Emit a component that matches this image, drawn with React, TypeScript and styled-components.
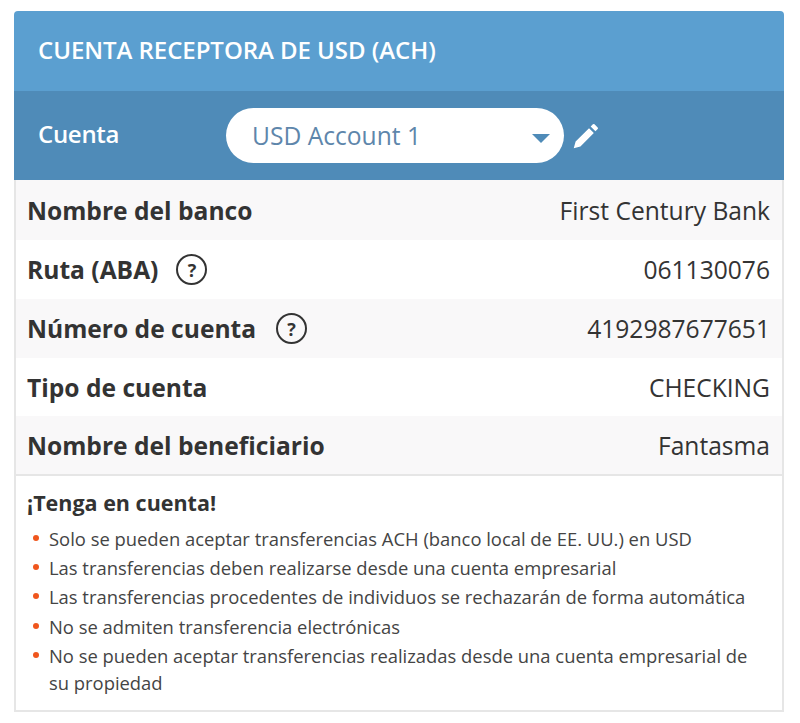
import React from "react";
import styled, { createGlobalStyle } from "styled-components";

const GlobalStyle = createGlobalStyle`
  html, body {
    margin: 0;
    background: #fff;
    font-family: "Open Sans", "Liberation Sans", sans-serif;
  }
`;

const Page = styled.div`
  padding: 11px 16px 10px 14px;
`;

const Card = styled.section`
  width: 770px;
  box-sizing: border-box;
  border-radius: 4px 4px 0 0;
  overflow: hidden;
`;

const Title = styled.h2`
  margin: 0;
  height: 80px;
  box-sizing: border-box;
  padding: 0 0 3px 24px;
  display: flex;
  align-items: center;
  background: #5b9fd0;
  color: #fff;
  font-size: 24px;
  font-weight: 600;
  letter-spacing: -0.05px;
`;

const AccountBar = styled.div`
  height: 89px;
  padding: 0 0 0 24px;
  display: flex;
  align-items: center;
  background: #4f8bb8;
  color: #fff;
  font-size: 24px;
  font-weight: 600;
`;

const AccountLabel = styled.span`
  width: 188px;
  padding-bottom: 4px;
  letter-spacing: -0.3px;
`;

const Select = styled.div`
  width: 338px;
  height: 55px;
  box-sizing: border-box;
  padding: 0 14px 0 26px;
  display: flex;
  align-items: center;
  justify-content: space-between;
  border-radius: 28px;
  background: #fff;
  color: #5e86ab;
  font-size: 24.6px;
  font-weight: 400;
`;

const Caret = styled.span`
  width: 0;
  height: 0;
  margin-top: 5px;
  border-left: 9px solid transparent;
  border-right: 9px solid transparent;
  border-top: 9px solid #4f8bb8;
`;

const EditIcon = styled.svg`
  width: 28px;
  height: 28px;
  margin-left: 8px;
  fill: #fff;
`;

const Rows = styled.div`
  border-left: 2px solid #e6e6e6;
  border-right: 2px solid #e6e6e6;
  border-bottom: 2px solid #e6e6e6;
`;

const Row = styled.div<{ $shaded: boolean; $height: number }>`
  height: ${(p) => p.$height}px;
  padding: 0 12px 0 11px;
  display: flex;
  align-items: center;
  justify-content: space-between;
  background: ${(p) => (p.$shaded ? "#f9f8f9" : "#fff")};
  color: #333;
  font-size: 24.6px;
`;

const RowLabel = styled.span`
  display: flex;
  align-items: center;
  font-weight: 700;
`;

const Help = styled.span<{ $gap: number }>`
  width: 27px;
  height: 27px;
  margin-left: ${(p) => p.$gap}px;
  display: flex;
  align-items: center;
  justify-content: center;
  border: 2px solid #333;
  border-radius: 50%;
  font-size: 18px;
  font-weight: 700;
`;

const RowValue = styled.span`
  font-weight: 400;
`;

const Notes = styled.div`
  height: 236px;
  box-sizing: border-box;
  padding: 13px 20px 0 11px;
  border: 2px solid #e6e6e6;
  border-top: 0;
  color: #444;
`;

const NotesTitle = styled.h3`
  margin: 0 0 7.5px;
  color: #333;
  font-size: 21.5px;
  line-height: 28px;
  font-weight: 700;
`;

const NotesList = styled.ul`
  margin: 0;
  padding: 0;
  list-style: none;
`;

const Note = styled.li`
  position: relative;
  margin-bottom: 2.4px;
  padding-left: 22px;
  font-size: 18.4px;
  line-height: 27px;

  &::before {
    content: "";
    position: absolute;
    left: 6px;
    top: 10px;
    width: 6px;
    height: 6px;
    border-radius: 50%;
    background: #f0561d;
  }
`;

const rows = [
  { label: "Nombre del banco", value: "First Century Bank", height: 60 },
  { label: "Ruta (ABA)", value: "061130076", help: 18, height: 59 },
  { label: "Número de cuenta", value: "4192987677651", help: 20, height: 59 },
  { label: "Tipo de cuenta", value: "CHECKING", height: 58 },
  { label: "Nombre del beneficiario", value: "Fantasma", height: 58 },
];

const notes = [
  "Solo se pueden aceptar transferencias ACH (banco local de EE. UU.) en USD",
  "Las transferencias deben realizarse desde una cuenta empresarial",
  "Las transferencias procedentes de individuos se rechazarán de forma automática",
  "No se admiten transferencia electrónicas",
  "No se pueden aceptar transferencias realizadas desde una cuenta empresarial de su propiedad",
];

export default function App() {
  return (
    <Page>
      <GlobalStyle />
      <Card>
        <Title>CUENTA RECEPTORA DE USD (ACH)</Title>
        <AccountBar>
          <AccountLabel>Cuenta</AccountLabel>
          <Select>
            USD Account 1
            <Caret />
          </Select>
          <EditIcon viewBox="0 0 24 24">
            <path d="M1.5 22.5l1.6-5.7L14.6 5.3l4.1 4.1L7.2 20.9l-5.7 1.6zM16 3.9l1.9-1.9a1 1 0 0 1 1.4 0l2.7 2.7a1 1 0 0 1 0 1.4L20.1 8 16 3.9z" />
          </EditIcon>
        </AccountBar>
        <Rows>
          {rows.map((row, i) => (
            <Row key={row.label} $shaded={i % 2 === 0} $height={row.height}>
              <RowLabel>
                {row.label}
                {row.help && <Help $gap={row.help}>?</Help>}
              </RowLabel>
              <RowValue>{row.value}</RowValue>
            </Row>
          ))}
        </Rows>
        <Notes>
          <NotesTitle>¡Tenga en cuenta!</NotesTitle>
          <NotesList>
            {notes.map((note) => (
              <Note key={note}>{note}</Note>
            ))}
          </NotesList>
        </Notes>
      </Card>
    </Page>
  );
}
